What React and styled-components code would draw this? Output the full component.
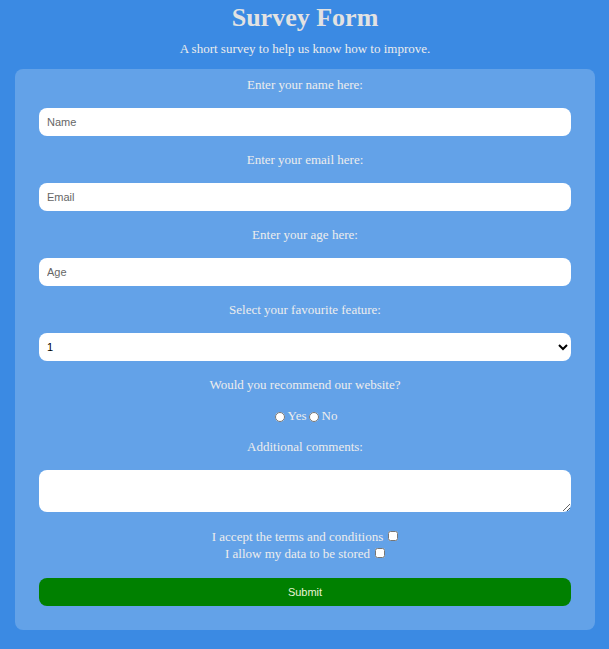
import React from 'react';
import styled, { createGlobalStyle } from 'styled-components';

const GlobalStyle = createGlobalStyle`
  html, body {
    margin: 0;
    padding: 0;
    background-color: #3b8ae3;
  }
  body {
    font-family: "Liberation Serif", "Times New Roman", serif;
    color: #e4e4e4;
  }
`;

const Page = styled.main`
  width: 609px;
  min-height: 649px;
  box-sizing: border-box;
  padding: 3px 14px 19px 15px;
  background-color: #3b8ae3;
`;

const Title = styled.h1`
  margin: 0;
  font-size: 26px;
  line-height: 30px;
  font-weight: bold;
  text-align: center;
  color: #e2e2e2;
`;

const Description = styled.p`
  margin: 8px 0 13px;
  font-size: 13px;
  line-height: 15px;
  text-align: center;
  color: #ececec;
`;

const Card = styled.form`
  display: flex;
  flex-direction: column;
  gap: 16px;
  padding: 8px 24px 24px;
  border-radius: 8px;
  background-color: #63a2e8;
`;

const Label = styled.label`
  display: block;
  margin: 0;
  font-size: 13px;
  line-height: 15px;
  text-align: center;
  color: #ededed;
`;

const fieldBase = `
  display: block;
  width: 100%;
  box-sizing: border-box;
  border: none;
  border-radius: 8px;
  background: #fff;
  font-family: "Liberation Sans", Arial, sans-serif;
  font-size: 11px;
  color: #000;
  outline: none;
`;

const Input = styled.input`
  ${fieldBase}
  height: 28px;
  padding: 0 8px;

  &::placeholder {
    color: #666;
  }
`;

const Select = styled.select`
  ${fieldBase}
  height: 28px;
  padding: 0 4px;
`;

const TextArea = styled.textarea`
  ${fieldBase}
  height: 42px;
  padding: 4px 8px;
  resize: vertical;
`;

const RadioRow = styled.div`
  display: flex;
  justify-content: center;
  align-items: center;
  height: 15px;
  font-size: 13px;
  color: #ededed;
`;

const Radio = styled.input.attrs({ type: 'radio' })`
  width: 10px;
  height: 10px;
  margin: 3px 3px 0 2px;
`;

const Checks = styled.div`
  display: flex;
  flex-direction: column;
  align-items: center;
`;

const CheckLine = styled.label`
  display: flex;
  align-items: center;
  height: 17px;
  font-size: 13px;
  color: #ededed;
`;

const CheckBox = styled.input.attrs({ type: 'checkbox' })`
  width: 10px;
  height: 10px;
  margin: 0 0 2px 5px;
`;

const Submit = styled.button`
  display: block;
  width: 100%;
  height: 28px;
  border: none;
  border-radius: 8px;
  background-color: #008000;
  color: #eaf3d6;
  font-family: "Liberation Sans", Arial, sans-serif;
  font-size: 11px;
  cursor: pointer;
`;

export default function App() {
  return (
    <>
      <GlobalStyle />
      <Page>
        <Title id="title">Survey Form</Title>
        <Description id="description">A short survey to help us know how to improve.</Description>
        <Card id="survey-form" onSubmit={(e) => e.preventDefault()}>
          <Label htmlFor="name">Enter your name here:</Label>
          <Input id="name" type="text" placeholder="Name" />
          <Label htmlFor="email">Enter your email here:</Label>
          <Input id="email" type="email" placeholder="Email" />
          <Label htmlFor="number">Enter your age here:</Label>
          <Input id="number" type="number" placeholder="Age" />
          <Label htmlFor="dropdown">Select your favourite feature:</Label>
          <Select id="dropdown" defaultValue="1">
            <option value="1">1</option>
            <option value="2">2</option>
            <option value="3">3</option>
          </Select>
          <Label as="p">Would you recommend our website?</Label>
          <RadioRow>
            <Radio name="recommend" id="yes" value="yes" />
            <label htmlFor="yes">Yes</label>
            <Radio name="recommend" id="no" value="no" />
            <label htmlFor="no">No</label>
          </RadioRow>
          <Label htmlFor="comments">Additional comments:</Label>
          <TextArea id="comments" />
          <Checks>
            <CheckLine>
              I accept the terms and conditions
              <CheckBox />
            </CheckLine>
            <CheckLine>
              I allow my data to be stored
              <CheckBox />
            </CheckLine>
          </Checks>
          <Submit id="submit" type="submit">Submit</Submit>
        </Card>
      </Page>
    </>
  );
}
